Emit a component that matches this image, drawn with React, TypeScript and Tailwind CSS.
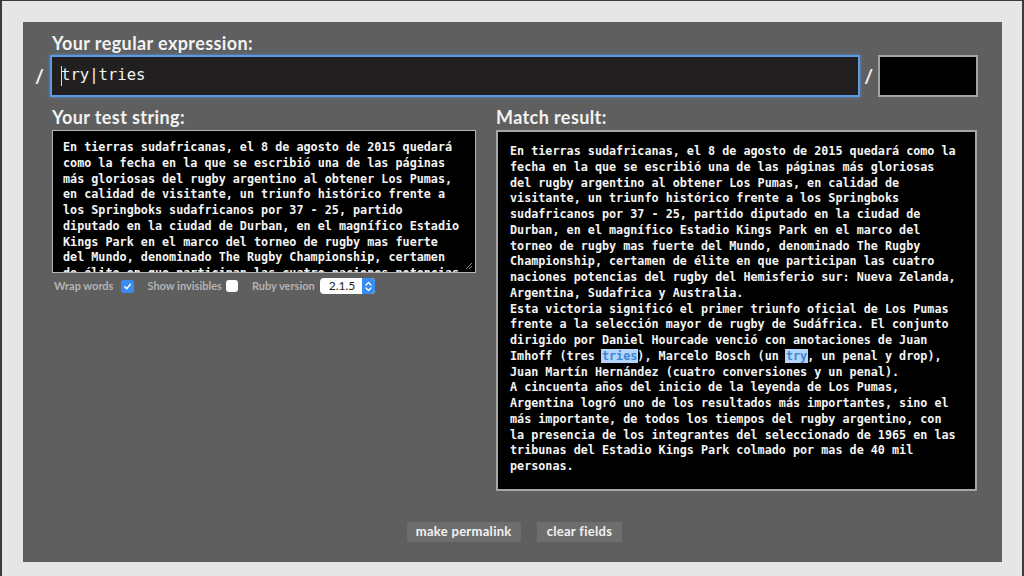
const testLines = [
  'En tierras sudafricanas, el 8 de agosto de 2015 quedará',
  'como la fecha en la que se escribió una de las páginas',
  'más gloriosas del rugby argentino al obtener Los Pumas,',
  'en calidad de visitante, un triunfo histórico frente a',
  'los Springboks sudafricanos por 37 - 25, partido',
  'diputado en la ciudad de Durban, en el magnífico Estadio',
  'Kings Park en el marco del torneo de rugby mas fuerte',
  'del Mundo, denominado The Rugby Championship, certamen',
  'de élite en que participan las cuatro naciones potencias',
]

const resultLines = [
  'En tierras sudafricanas, el 8 de agosto de 2015 quedará como la',
  'fecha en la que se escribió una de las páginas más gloriosas',
  'del rugby argentino al obtener Los Pumas, en calidad de',
  'visitante, un triunfo histórico frente a los Springboks',
  'sudafricanos por 37 - 25, partido diputado en la ciudad de',
  'Durban, en el magnífico Estadio Kings Park en el marco del',
  'torneo de rugby mas fuerte del Mundo, denominado The Rugby',
  'Championship, certamen de élite en que participan las cuatro',
  'naciones potencias del rugby del Hemisferio sur: Nueva Zelanda,',
  'Argentina, Sudafrica y Australia.',
  'Esta victoria significó el primer triunfo oficial de Los Pumas',
  'frente a la selección mayor de rugby de Sudáfrica. El conjunto',
  'dirigido por Daniel Hourcade venció con anotaciones de Juan',
]

const resultTail = [
  'Juan Martín Hernández (cuatro conversiones y un penal).',
  'A cincuenta años del inicio de la leyenda de Los Pumas,',
  'Argentina logró uno de los resultados más importantes, sino el',
  'más importante, de todos los tiempos del rugby argentino, con',
  'la presencia de los integrantes del seleccionado de 1965 en las',
  'tribunas del Estadio Kings Park colmado por mas de 40 mil',
  'personas.',
]

const label = "font-['Lato',sans-serif] font-bold text-[18px] tracking-[0.4px] leading-[20px] text-[#f2f2f2]"
const mono = "font-['DejaVu_Sans_Mono',monospace] font-bold text-[11.75px] leading-[15.75px] text-[#f4f4f4] whitespace-pre"
const button = "h-[20px] bg-[#6e6e6e] font-['Lato',sans-serif] font-bold text-[13px] tracking-[0.3px] text-[#f2f2f2]"

function Match({ children }: { children: string }) {
  return <span className="bg-[#b3d4fb] text-[#3f86d6] px-px -mx-px">{children}</span>
}

export default function App() {
  return (
    <div className="w-[1024px] h-[576px] bg-[#e6e6e6] border-l-2 border-t border-r-2 border-[#3c3c3c] pl-[21px] pt-[21px] overflow-hidden">
      <div className="w-[979px] h-[540px] bg-[#5f5f5f] flex flex-col">
        {/* Regex */}
        <div className={`${label} ml-[29px] mt-[11px]`}>Your regular expression:</div>
        <div className="flex items-center mt-[2px]">
          <span className={`${label} text-[19px] w-[27px] pl-[12px]`}>/</span>
          <div className="w-[810px] h-[42px] bg-[#221f20] border-2 border-[#5c9be2] shadow-[0_0_3px_#4f8fd8] flex items-center pl-[9px]">
            <span className="inline-block w-px h-[20px] bg-[#dddddd] -mr-px" />
            <span className="font-['DejaVu_Sans_Mono',monospace] text-[15.6px] text-[#f4f4f4]">try|tries</span>
          </div>
          <span className={`${label} text-[19px] w-[18px] text-center`}>/</span>
          <div className="w-[100px] h-[42px] bg-black border-2 border-[#a3a3a3]" />
        </div>

        {/* Test string + result */}
        <div className="flex gap-[20px] ml-[29px] mt-[10px]">
          <div className="w-[424px] flex flex-col">
            <div className={label}>Your test string:</div>
            <div className="relative mt-[3px] h-[143px] bg-black border border-[#b5b5b5] pt-[9px] pl-[10px] overflow-hidden">
              {testLines.map((l, i) => (
                <div key={i} className={mono}>{l}</div>
              ))}
              <svg className="absolute right-[2px] bottom-[2px]" width="8" height="8" viewBox="0 0 8 8">
                <path d="M1 7 L7 1 M4 7 L7 4" stroke="#8a8a8a" strokeWidth="1" />
              </svg>
            </div>
            <div className="flex items-center mt-[5px] h-[16px] pl-[2px] font-['Lato',sans-serif] font-bold text-[11px] text-[#b3b3b3]">
              <span>Wrap words</span>
              <span className="ml-[8px] w-[13px] h-[13px] rounded-[3px] bg-[#3a8cf2] flex items-center justify-center">
                <svg width="9" height="9" viewBox="0 0 10 10">
                  <path d="M2 5.2 L4.2 7.5 L8.2 2.5" fill="none" stroke="white" strokeWidth="1.6" strokeLinecap="round" strokeLinejoin="round" />
                </svg>
              </span>
              <span className="ml-[13px]">Show invisibles</span>
              <span className="ml-[4px] w-[12px] h-[12px] rounded-[3px] bg-white" />
              <span className="ml-[14px]">Ruby version</span>
              <span className="ml-[5px] w-[55px] h-[16px] bg-white rounded-[4px] flex items-center overflow-hidden">
                <span className="flex-1 pl-[9px] text-[12px] font-normal text-[#222222] font-['Lato',sans-serif]">2.1.5</span>
                <span className="w-[13px] h-full bg-[#3a8cf2] rounded-r-[4px] flex items-center justify-center">
                  <svg width="7" height="11" viewBox="0 0 7 11">
                    <path d="M1 4 L3.5 1.5 L6 4 M1 7 L3.5 9.5 L6 7" fill="none" stroke="white" strokeWidth="1.3" strokeLinecap="round" strokeLinejoin="round" />
                  </svg>
                </span>
              </span>
            </div>
          </div>

          <div className="w-[481px] flex flex-col">
            <div className={label}>Match result:</div>
            <div className="mt-[3px] h-[361px] bg-black border-2 border-[#a6a6a6] pt-[12px] pl-[12px] overflow-hidden">
              {resultLines.map((l, i) => (
                <div key={i} className={mono}>{l}</div>
              ))}
              <div className={mono}>
                Imhoff (tres <Match>tries</Match>), Marcelo Bosch (un <Match>try</Match>, un penal y drop),
              </div>
              {resultTail.map((l, i) => (
                <div key={i} className={mono}>{l}</div>
              ))}
            </div>
          </div>
        </div>

        {/* Actions */}
        <div className="flex justify-center gap-[16px] mt-[31px] pl-[4px]">
          <button className={`${button} px-[9px]`}>make permalink</button>
          <button className={`${button} px-[10px]`}>clear fields</button>
        </div>
      </div>
    </div>
  )
}
